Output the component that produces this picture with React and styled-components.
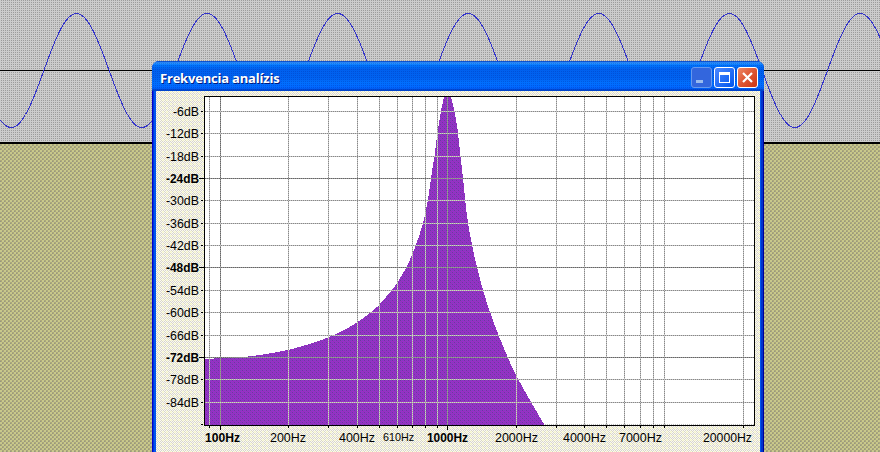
import React from "react";
import styled, { createGlobalStyle } from "styled-components";

const Global = createGlobalStyle`
  * { box-sizing: border-box; }
  html, body { margin: 0; width: 880px; height: 452px; overflow: hidden; }
`;

const Desktop = styled.main`
  position: relative;
  width: 880px;
  height: 452px;
  overflow: hidden;
  display: flex;
  flex-direction: column;
  font-family: "Liberation Sans", Arial, sans-serif;
`;

const Track = styled.section`
  height: 144px;
  border-bottom: 2px solid #000;
  background: conic-gradient(#9c9c9c 25%, #ccc 0) 0 0 / 2px 2px;
`;

const Workspace = styled.section`
  flex: 1;
  background:
    conic-gradient(#c8c88c 25%, transparent 0) 0 0 / 4px 4px,
    conic-gradient(#c8c88c 25%, transparent 0) 2px 2px / 4px 4px,
    conic-gradient(#969682 25%, #aaa67a 0) 1px 1px / 2px 2px;
`;

const Dialog = styled.section`
  position: absolute;
  left: 152px;
  top: 61px;
  width: 612px;
  height: 400px;
  display: flex;
  flex-direction: column;
  border-radius: 7px 7px 0 0;
  background: linear-gradient(90deg, #0000cc 0 1px, #0033dd 1px 2px, #0055ee 2px 609px, #0033cc 609px 611px, #000099 611px);
  overflow: hidden;
`;

const TitleBar = styled.header`
  height: 30px;
  flex: none;
  display: flex;
  align-items: center;
  padding: 4px 6px 1px 8px;
  gap: 2px;
  background:
    conic-gradient(rgba(0, 30, 150, 0.25) 25%, transparent 0) 0 0 / 2px 2px,
    linear-gradient(#0044cc 0, #3399ff 2px, #0077ff 4px, #0060ee 8px, #0062f0 17px, #0070ff 22px, #0066ff 27px, #0044cc 29px);
`;

const Title = styled.h1`
  flex: 1;
  margin: 0;
  color: #fff;
  font: 700 13px/20px "Open Sans", "Noto Sans", sans-serif;
  letter-spacing: -0.2px;
  white-space: nowrap;
  text-shadow: 1px 1px #001a80;
`;

const WindowButton = styled.button`
  width: 21px;
  height: 21px;
  padding: 0;
  border: 1px solid ${(p) => (p.$dim ? "#6699ee" : "#fff")};
  border-radius: 3px;
  display: flex;
  background: ${(p) => p.$fill};
  svg { display: block; }
`;

const Content = styled.div`
  flex: 1;
  margin: 0 4px;
  display: flex;
  background:
    conic-gradient(rgba(255, 255, 204, 0.6) 25%, transparent 0) 0 0 / 4px 4px,
    repeating-conic-gradient(#fbf9f2 0 25%, #d8d6cc 0 50%) 0 0 / 2px 2px;
`;

const Chart = styled.svg`
  display: block;
  width: 604px;
  height: 361px;
  text { font-family: "Liberation Sans", Arial, sans-serif; font-size: 12px; fill: #000; }
  .small { font-size: 11px; }
  .major { font-weight: 700; }
`;

const wavePath = Array.from({ length: 881 }, (_, x) => x)
  .map((x) => `${x ? "L" : "M"}${x + 0.5} ${(70.5 - 57 * Math.cos(((x - 76) * 2 * Math.PI) / 130.6)).toFixed(1)}`)
  .join("");

const levels = [111, 133, 156, 178, 200, 223, 245, 267, 290, 312, 335, 357, 379, 402];
const freqLines = [209, 220, 288, 328, 357, 379, 397, 412, 425, 437, 447, 516, 556, 584, 606, 624, 640, 653, 664, 743];
const freqLabels = [
  ["100Hz", 205, 35, "major"],
  ["200Hz", 270, 36],
  ["400Hz", 339, 36],
  ["610Hz", 383, 31, "small"],
  ["1000Hz", 427, 41, "major"],
  ["2000Hz", 495, 43],
  ["4000Hz", 563, 43],
  ["7000Hz", 619, 43],
  ["20000Hz", 703, 49],
];

const leftSlope = [
  [205, 359], [220, 358.2], [243, 357], [265, 354.2], [288, 350], [310, 343.8], [328, 337.5],
  [343, 330.5], [357, 322.5], [370, 313], [379, 305], [391, 291], [397, 283], [406, 268],
  [412, 255], [417, 242], [423, 223], [428, 200], [431, 178], [434.5, 156], [437.5, 133],
  [441, 111], [444, 97],
];
const rightSlope = [
  [451, 97], [454.5, 111], [458, 133], [460.5, 156], [463, 178], [465.2, 200], [468, 223],
  [472, 245], [477, 267], [483, 290], [490, 312], [498.5, 335], [508, 358], [516, 375],
  [531, 402], [544.5, 425],
];

// Catmull-Rom spline through the points, as cubic segments.
const spline = (pts) =>
  pts.slice(0, -1).map((p, i) => {
    const before = pts[i - 1] || p;
    const next = pts[i + 1];
    const after = pts[i + 2] || next;
    const c1 = [p[0] + (next[0] - before[0]) / 6, p[1] + (next[1] - before[1]) / 6];
    const c2 = [next[0] - (after[0] - p[0]) / 6, next[1] - (after[1] - p[1]) / 6];
    return `C${c1} ${c2} ${next}`;
  }).join("");

const areaPath = `M205 425V359${spline(leftSlope)}H451${spline(rightSlope)}Z`;

function GridLines({ base, dash, major, majorBase }) {
  const line = (key, d, strong) => (
    <g key={key} fill="none">
      <path d={d} stroke={strong ? majorBase : base} />
      <path d={d} stroke={strong ? major : dash} strokeDasharray="1 1" />
    </g>
  );
  return (
    <g>
      {freqLines.map((x) => line(`x${x}`, `M${x + 0.5} 97V425`, x === 220 || x === 447))}
      {levels.map((y, i) => line(`y${y}`, `M205 ${y + 0.5}H754`, i % 4 === 3))}
    </g>
  );
}

function SpectrumChart() {
  return (
    <Chart viewBox="156 91 604 361" shapeRendering="crispEdges">
      <defs>
        <pattern id="purple" width="4" height="4" patternUnits="userSpaceOnUse">
          <rect width="4" height="4" fill="#9630c8" />
          <path d="M0 0h1v1h-1zM2 2h1v1h-1z" fill="#6c389f" />
          <path d="M2 0h1v1h-1zM0 2h1v1h-1z" fill="#7c44b8" />
          <path d="M1 1h1v1h-1zM3 3h1v1h-1z" fill="#9433b8" />
        </pattern>
        <clipPath id="area"><path d={areaPath} /></clipPath>
      </defs>
      <rect x="204" y="96" width="551" height="330" fill="#fff" />
      <path d="M205 424.5H754" stroke="#bbb" strokeDasharray="1 1" />
      <path d={areaPath} fill="url(#purple)" />
      <GridLines base="#c4c4c4" dash="#888888" major="#666" majorBase="#999" />
      <g clipPath="url(#area)">
        <GridLines base="#cccccc" dash="#aaaa99" major="#999999" majorBase="#888888" />
      </g>
      <rect x="204.5" y="96.5" width="550" height="329" fill="none" stroke="#000" />
      {levels.map((y, i) => {
        const major = i % 4 === 3;
        return (
          <g key={y}>
            <text className={major ? "major" : undefined} x="199" y={y + 5} textAnchor="end" textLength={i ? 33 : 26} lengthAdjust="spacingAndGlyphs">
              {`-${(i + 1) * 6}dB`}
            </text>
            <path d={`M${major ? 199 : 201} ${y + 0.5}H${major ? 204 : 203}`} stroke="#000" />
          </g>
        );
      })}
      <path d="M201 424.5h2" stroke="#000" />
      {freqLines.map((x) => (
        <path key={x} d={`M${x + 0.5} 426v${x === 220 || x === 447 ? 4 : 2}`} stroke="#000" />
      ))}
      {freqLabels.map(([label, x, width, kind]) => (
        <text key={label} className={kind} x={x} y={kind === "small" ? 441 : 442} textLength={width} lengthAdjust="spacingAndGlyphs">{label}</text>
      ))}
    </Chart>
  );
}

export default function App() {
  return (
    <>
      <Global />
      <Desktop>
        <Track>
          <svg width="880" height="142" shapeRendering="crispEdges" fill="none">
            <path d="M0 70.5H880" stroke="#000" />
            <path d={wavePath} stroke="#3333cc" />
          </svg>
        </Track>
        <Workspace />
        <Dialog>
          <TitleBar>
            <Title>Frekvencia analízis</Title>
            <WindowButton $dim $fill="#3366dd" aria-label="Minimize">
              <svg width="19" height="19"><path d="M4 12h7v3H4z" fill="#99bbee" /></svg>
            </WindowButton>
            <WindowButton $fill="linear-gradient(135deg,#4d88ff,#0055ee)" aria-label="Maximize">
              <svg width="19" height="19" fill="none"><path d="M4.5 4v11M14.5 4v11M4 14.5h11" stroke="#fff" /><path d="M4 5.5h11" stroke="#fff" strokeWidth="3" /></svg>
            </WindowButton>
            <WindowButton $fill="linear-gradient(135deg,#ee8866,#dd5533 50%,#cc3311)" aria-label="Close">
              <svg width="19" height="19"><path d="M5 5l9 9M14 5l-9 9" stroke="#fff" strokeWidth="2.2" /></svg>
            </WindowButton>
          </TitleBar>
          <Content><SpectrumChart /></Content>
        </Dialog>
      </Desktop>
    </>
  );
}
